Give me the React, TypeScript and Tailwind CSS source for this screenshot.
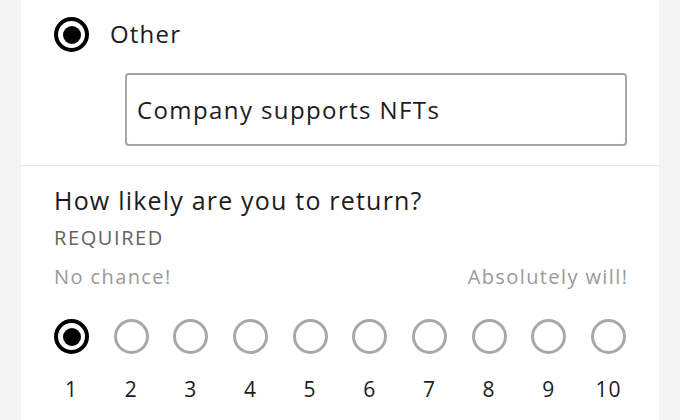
import React from "react";

function Radio({ checked }: { checked?: boolean }) {
  if (checked) {
    return (
      <div className="w-[35px] h-[35px] rounded-full border-[4px] border-black flex items-center justify-center">
        <div className="w-[18px] h-[18px] rounded-full bg-black" />
      </div>
    );
  }
  return <div className="w-[35px] h-[35px] rounded-full border-[3px] border-[#a8a8a8]" />;
}

export default function App() {
  const scale = [1, 2, 3, 4, 5, 6, 7, 8, 9, 10];

  return (
    <div
      className="w-[680px] h-[420px] bg-[#f3f3f3] flex px-[21px] overflow-hidden"
      style={{ fontFamily: "'Open Sans', Lato, sans-serif" }}
    >
      <div className="flex-1 bg-white flex flex-col">
        <div className="pl-[33px] pt-[17px] pb-[19px] border-b border-[#e9e9e9]">
          <div className="flex items-center gap-[21px]">
            <Radio checked />
            <span className="text-[24px] leading-[32px] tracking-[1.2px] text-[#1c1c1c] -mt-[2px]">Other</span>
          </div>
          <div className="ml-[71px] mt-[21px] w-[502px] h-[73px] border-2 border-[#a5a5a5] rounded-[4px] flex items-center px-[10px]">
            <span className="text-[24px] tracking-[1.4px] text-[#1c1c1c]">Company supports NFTs</span>
          </div>
        </div>

        <div className="pl-[33px] pr-[32px] pt-[18px]">
          <div className="text-[25px] leading-[32px] tracking-[1.2px] text-[#1c1c1c]">How likely are you to return?</div>
          <div className="text-[20px] leading-[26px] tracking-[1.6px] text-[#626262] mt-[9px]">REQUIRED</div>
          <div className="flex justify-between text-[20px] leading-[26px] tracking-[1.4px] text-[#9a9a9a] mt-[13px]">
            <span>No chance!</span>
            <span className="-mr-[1.4px]">Absolutely will!</span>
          </div>
          <div className="flex justify-between mt-[29px] w-[572px]">
            {scale.map((n) => (
              <div key={n} className="flex flex-col items-center w-[35px]">
                <Radio checked={n === 1} />
                <span className="text-[21px] leading-[28px] tracking-[1px] text-[#1c1c1c] mt-[21px]">{n}</span>
              </div>
            ))}
          </div>
        </div>
      </div>
    </div>
  );
}
